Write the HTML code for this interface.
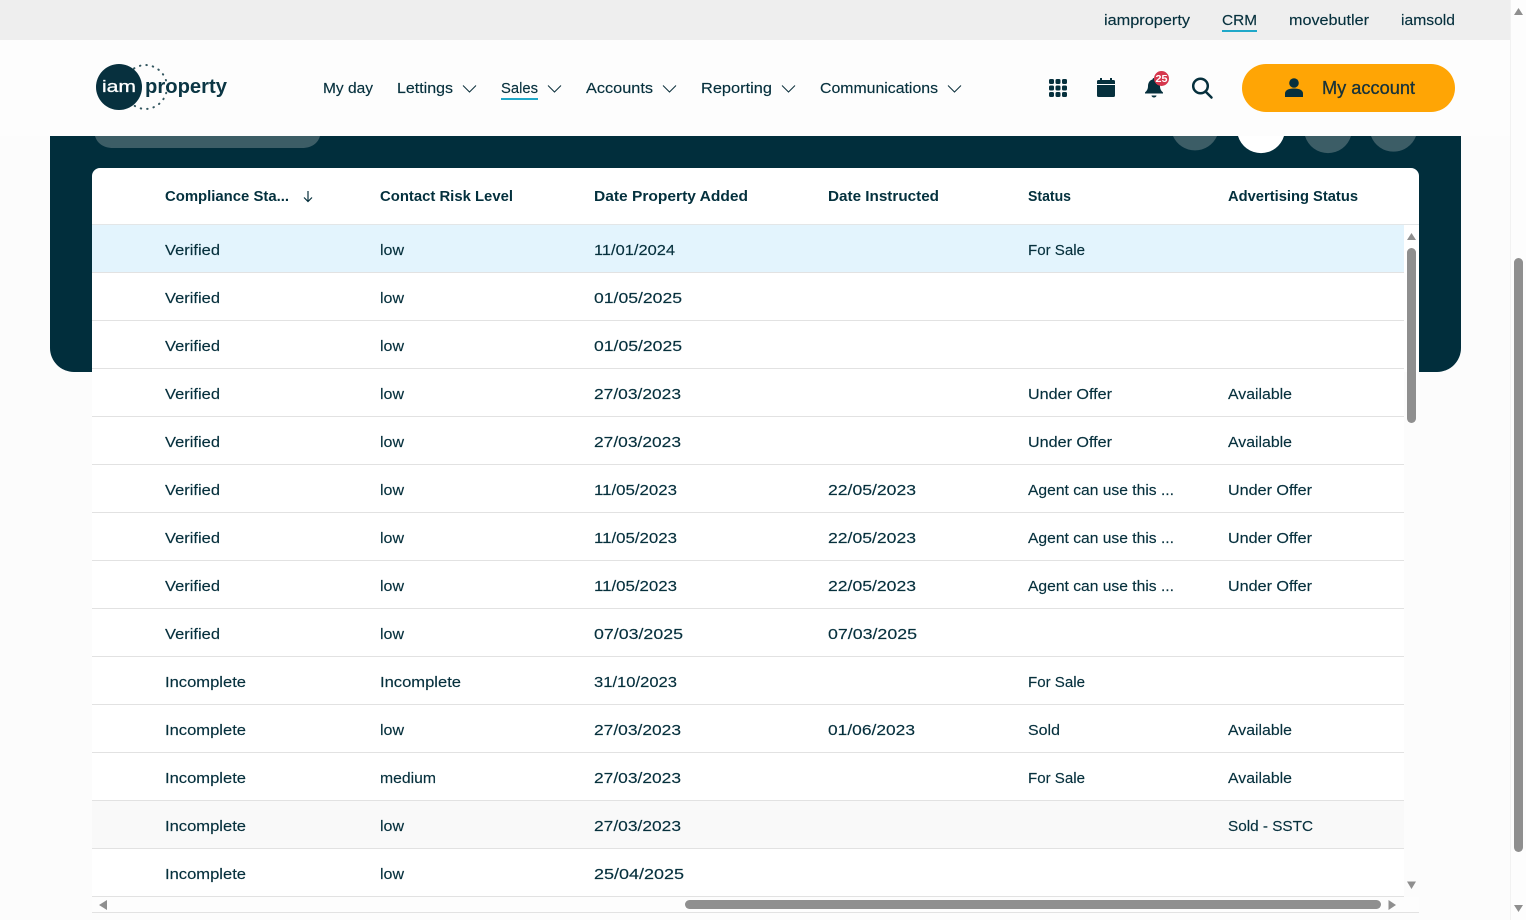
<!DOCTYPE html>
<html lang="en"><head><meta charset="utf-8"><title>iamproperty CRM</title>
<style>
html,body{margin:0;padding:0;width:1526px;height:920px;overflow:hidden;background:#fcfcfc}
svg{display:block;position:absolute;left:0;top:0}
text{font-family:"Liberation Sans",sans-serif;font-size:15px;fill:#06303d;stroke:#06303d;stroke-width:.15px}
.h{font-weight:bold;font-size:14.5px;fill:#03303d;stroke:none}
</style></head><body>
<svg width="1526" height="920" viewBox="0 0 1526 920" xmlns="http://www.w3.org/2000/svg">
<rect width="1526" height="920" fill="#fcfcfc"/>
<!-- panel -->
<path d="M50 136H1461V348a24 24 0 0 1-24 24H74a24 24 0 0 1-24-24Z" fill="#012e3c"/>
<path d="M95 136H320C318 143 312 148 302 148H113C103 148 97 143 95 136Z" fill="#3c5d66"/>
<g>
<path d="M1173 136a24 24 0 0 0 44 0Z" fill="#3c5d66"/>
<path d="M1238 136a24 24 0 0 0 46 0Z" fill="#ffffff"/>
<path d="M1305 136a24 24 0 0 0 46 0Z" fill="#3c5d66"/>
<path d="M1371 136a24 24 0 0 0 45 0Z" fill="#3c5d66"/>
</g>
<!-- top bar -->
<rect width="1510" height="40" fill="#eeeeee"/>
<rect y="40" width="1510" height="96" fill="#fdfdfd"/>
<text x="1104" y="25" textLength="86" lengthAdjust="spacingAndGlyphs">iamproperty</text>
<text x="1222" y="25" textLength="35" lengthAdjust="spacingAndGlyphs">CRM</text>
<rect x="1222" y="30" width="35" height="2" fill="#1fa8c9"/>
<text x="1289" y="25" textLength="80" lengthAdjust="spacingAndGlyphs">movebutler</text>
<text x="1401" y="25" textLength="54" lengthAdjust="spacingAndGlyphs">iamsold</text>
<!-- logo -->
<path d="M134 68.500A22 22 0 0 1 145 65A22 22 0 0 1 167 87A22 22 0 0 1 145 109A22 22 0 0 1 134 105.500" fill="none" stroke="#33565f" stroke-width="2" stroke-linecap="round" stroke-dasharray="0.5 6"/>
<circle cx="119" cy="87" r="23" fill="#07303e"/>
<text x="102" y="92" textLength="34" lengthAdjust="spacingAndGlyphs" style="fill:#fff;stroke:#fff;stroke-width:.3px;font-size:17px">iam</text>
<text x="145" y="93" textLength="82" lengthAdjust="spacingAndGlyphs" style="font-weight:bold;font-size:20px;fill:#0b3644;stroke:none">property</text>
<!-- nav -->
<text x="323" y="93" textLength="50" lengthAdjust="spacingAndGlyphs">My day</text>
<text x="397" y="93" textLength="56" lengthAdjust="spacingAndGlyphs">Lettings</text>
<text x="501" y="93" textLength="37" lengthAdjust="spacingAndGlyphs">Sales</text>
<rect x="501" y="98" width="37" height="2" fill="#1fa8c9"/>
<text x="586" y="93" textLength="67" lengthAdjust="spacingAndGlyphs">Accounts</text>
<text x="701" y="93" textLength="71" lengthAdjust="spacingAndGlyphs">Reporting</text>
<text x="820" y="93" textLength="118" lengthAdjust="spacingAndGlyphs">Communications</text>
<g fill="none" stroke="#0b2f3b" stroke-width="1">
<path d="M463 85.500l6.500 6.500 6.500-6.500"/><path d="M548 85.500l6.500 6.500 6.500-6.500"/><path d="M663 85.500l6.500 6.500 6.500-6.500"/><path d="M782 85.500l6.500 6.500 6.500-6.500"/><path d="M948 85.500l6.500 6.500 6.500-6.500"/>
</g>
<!-- icons -->
<g fill="#06303d">
<rect x="1049" y="79" width="5" height="5" rx="1.500"/><rect x="1055.500" y="79" width="5" height="5" rx="1.500"/><rect x="1062" y="79" width="5" height="5" rx="1.500"/>
<rect x="1049" y="85.500" width="5" height="5" rx="1.500"/><rect x="1055.500" y="85.500" width="5" height="5" rx="1.500"/><rect x="1062" y="85.500" width="5" height="5" rx="1.500"/>
<rect x="1049" y="92" width="5" height="5" rx="1.500"/><rect x="1055.500" y="92" width="5" height="5" rx="1.500"/><rect x="1062" y="92" width="5" height="5" rx="1.500"/>
<path d="M1097 81.500a1.500 1.500 0 0 1 1.500-1.500H1100V78h2v2h8v-2h2v2h1.500a1.500 1.500 0 0 1 1.500 1.500V84h-18Z"/>
<path d="M1097 85h18v10.500a1.500 1.500 0 0 1-1.500 1.500h-15a1.500 1.500 0 0 1-1.500-1.500Z"/>
<path d="M1154 78c-1 0-1.500.700-1.500 1.500-3 .8-4.500 3.500-4.500 6.500 0 3.500-1.500 5-3 6.500v1h18v-1c-1.500-1.500-3-3-3-6.500 0-3-1.500-5.700-4.500-6.500 0-.8-.5-1.500-1.500-1.500Z"/>
<path d="M1151.500 95.500h5a2.500 2 0 0 1-5 0Z"/>
<circle cx="1161.500" cy="78.500" r="7.500" fill="#d5374d"/>
</g>
<text x="1155.500" y="82" textLength="12" lengthAdjust="spacingAndGlyphs" style="fill:#fff;stroke:none;font-size:10px;font-weight:bold">25</text>
<g fill="none" stroke="#06303d" stroke-width="2.500"><circle cx="1200.500" cy="86" r="7.300"/><path d="M1206 92l5.500 5.500" stroke-linecap="round"/></g>
<rect x="1242" y="64" width="213" height="48" rx="24" fill="#ffa505"/>
<path d="M1285 97v-3.500c0-3 3-5 9-5s9 2 9 5V97Z" fill="#06303d"/><circle cx="1294" cy="83" r="4.800" fill="#06303d"/>
<text x="1322" y="94" textLength="93" lengthAdjust="spacingAndGlyphs" style="font-size:18px;fill:#17323a;stroke:#17323a;stroke-width:.3px">My account</text>
<!-- table -->
<path d="M92 176a8 8 0 0 1 8-8H1411a8 8 0 0 1 8 8V372H92Z" fill="#ffffff"/>
<rect x="92" y="372" width="1312" height="525" fill="#ffffff"/>
<rect x="92" y="224" width="1327" height="1" fill="#e3e6e7"/>
<rect x="92" y="225" width="1312" height="47" fill="#e3f4fd"/>
<rect x="92" y="801" width="1312" height="47" fill="#f9f9f9"/>
<g fill="#e2e2e2">
<rect x="92" y="272" width="1312" height="1"/><rect x="92" y="320" width="1312" height="1"/><rect x="92" y="368" width="1312" height="1"/><rect x="92" y="416" width="1312" height="1"/><rect x="92" y="464" width="1312" height="1"/><rect x="92" y="512" width="1312" height="1"/><rect x="92" y="560" width="1312" height="1"/><rect x="92" y="608" width="1312" height="1"/><rect x="92" y="656" width="1312" height="1"/><rect x="92" y="704" width="1312" height="1"/><rect x="92" y="752" width="1312" height="1"/><rect x="92" y="800" width="1312" height="1"/><rect x="92" y="848" width="1312" height="1"/><rect x="92" y="896" width="1312" height="1"/><rect x="92" y="912" width="1327" height="1"/>
</g>
<rect x="92" y="897" width="1327" height="15" fill="#fdfdfd"/>
<!-- header -->
<text class="h" x="165" y="201" textLength="124" lengthAdjust="spacingAndGlyphs">Compliance Sta...</text>
<path d="M308 191v10M304 197.500l4 4 4-4" fill="none" stroke="#06303d" stroke-width="1.200"/>
<text class="h" x="380" y="201" textLength="133" lengthAdjust="spacingAndGlyphs">Contact Risk Level</text>
<text class="h" x="594" y="201" textLength="154" lengthAdjust="spacingAndGlyphs">Date Property Added</text>
<text class="h" x="828" y="201" textLength="111" lengthAdjust="spacingAndGlyphs">Date Instructed</text>
<text class="h" x="1028" y="201" textLength="43" lengthAdjust="spacingAndGlyphs">Status</text>
<text class="h" x="1228" y="201" textLength="130" lengthAdjust="spacingAndGlyphs">Advertising Status</text>
<!-- rows -->
<g>
<text x="165" y="255" textLength="55" lengthAdjust="spacingAndGlyphs">Verified</text><text x="380" y="255" textLength="24" lengthAdjust="spacingAndGlyphs">low</text><text x="594" y="255" textLength="81" lengthAdjust="spacingAndGlyphs">11/01/2024</text><text x="1028" y="255" textLength="57" lengthAdjust="spacingAndGlyphs">For Sale</text>
<text x="165" y="303" textLength="55" lengthAdjust="spacingAndGlyphs">Verified</text><text x="380" y="303" textLength="24" lengthAdjust="spacingAndGlyphs">low</text><text x="594" y="303" textLength="88" lengthAdjust="spacingAndGlyphs">01/05/2025</text>
<text x="165" y="351" textLength="55" lengthAdjust="spacingAndGlyphs">Verified</text><text x="380" y="351" textLength="24" lengthAdjust="spacingAndGlyphs">low</text><text x="594" y="351" textLength="88" lengthAdjust="spacingAndGlyphs">01/05/2025</text>
<text x="165" y="399" textLength="55" lengthAdjust="spacingAndGlyphs">Verified</text><text x="380" y="399" textLength="24" lengthAdjust="spacingAndGlyphs">low</text><text x="594" y="399" textLength="87" lengthAdjust="spacingAndGlyphs">27/03/2023</text><text x="1028" y="399" textLength="84" lengthAdjust="spacingAndGlyphs">Under Offer</text><text x="1228" y="399" textLength="64" lengthAdjust="spacingAndGlyphs">Available</text>
<text x="165" y="447" textLength="55" lengthAdjust="spacingAndGlyphs">Verified</text><text x="380" y="447" textLength="24" lengthAdjust="spacingAndGlyphs">low</text><text x="594" y="447" textLength="87" lengthAdjust="spacingAndGlyphs">27/03/2023</text><text x="1028" y="447" textLength="84" lengthAdjust="spacingAndGlyphs">Under Offer</text><text x="1228" y="447" textLength="64" lengthAdjust="spacingAndGlyphs">Available</text>
<text x="165" y="495" textLength="55" lengthAdjust="spacingAndGlyphs">Verified</text><text x="380" y="495" textLength="24" lengthAdjust="spacingAndGlyphs">low</text><text x="594" y="495" textLength="83" lengthAdjust="spacingAndGlyphs">11/05/2023</text><text x="828" y="495" textLength="88" lengthAdjust="spacingAndGlyphs">22/05/2023</text><text x="1028" y="495" textLength="146" lengthAdjust="spacingAndGlyphs">Agent can use this ...</text><text x="1228" y="495" textLength="84" lengthAdjust="spacingAndGlyphs">Under Offer</text>
<text x="165" y="543" textLength="55" lengthAdjust="spacingAndGlyphs">Verified</text><text x="380" y="543" textLength="24" lengthAdjust="spacingAndGlyphs">low</text><text x="594" y="543" textLength="83" lengthAdjust="spacingAndGlyphs">11/05/2023</text><text x="828" y="543" textLength="88" lengthAdjust="spacingAndGlyphs">22/05/2023</text><text x="1028" y="543" textLength="146" lengthAdjust="spacingAndGlyphs">Agent can use this ...</text><text x="1228" y="543" textLength="84" lengthAdjust="spacingAndGlyphs">Under Offer</text>
<text x="165" y="591" textLength="55" lengthAdjust="spacingAndGlyphs">Verified</text><text x="380" y="591" textLength="24" lengthAdjust="spacingAndGlyphs">low</text><text x="594" y="591" textLength="83" lengthAdjust="spacingAndGlyphs">11/05/2023</text><text x="828" y="591" textLength="88" lengthAdjust="spacingAndGlyphs">22/05/2023</text><text x="1028" y="591" textLength="146" lengthAdjust="spacingAndGlyphs">Agent can use this ...</text><text x="1228" y="591" textLength="84" lengthAdjust="spacingAndGlyphs">Under Offer</text>
<text x="165" y="639" textLength="55" lengthAdjust="spacingAndGlyphs">Verified</text><text x="380" y="639" textLength="24" lengthAdjust="spacingAndGlyphs">low</text><text x="594" y="639" textLength="89" lengthAdjust="spacingAndGlyphs">07/03/2025</text><text x="828" y="639" textLength="89" lengthAdjust="spacingAndGlyphs">07/03/2025</text>
<text x="165" y="687" textLength="81" lengthAdjust="spacingAndGlyphs">Incomplete</text><text x="380" y="687" textLength="81" lengthAdjust="spacingAndGlyphs">Incomplete</text><text x="594" y="687" textLength="83" lengthAdjust="spacingAndGlyphs">31/10/2023</text><text x="1028" y="687" textLength="57" lengthAdjust="spacingAndGlyphs">For Sale</text>
<text x="165" y="735" textLength="81" lengthAdjust="spacingAndGlyphs">Incomplete</text><text x="380" y="735" textLength="24" lengthAdjust="spacingAndGlyphs">low</text><text x="594" y="735" textLength="87" lengthAdjust="spacingAndGlyphs">27/03/2023</text><text x="828" y="735" textLength="87" lengthAdjust="spacingAndGlyphs">01/06/2023</text><text x="1028" y="735" textLength="32" lengthAdjust="spacingAndGlyphs">Sold</text><text x="1228" y="735" textLength="64" lengthAdjust="spacingAndGlyphs">Available</text>
<text x="165" y="783" textLength="81" lengthAdjust="spacingAndGlyphs">Incomplete</text><text x="380" y="783" textLength="56" lengthAdjust="spacingAndGlyphs">medium</text><text x="594" y="783" textLength="87" lengthAdjust="spacingAndGlyphs">27/03/2023</text><text x="1028" y="783" textLength="57" lengthAdjust="spacingAndGlyphs">For Sale</text><text x="1228" y="783" textLength="64" lengthAdjust="spacingAndGlyphs">Available</text>
<text x="165" y="831" textLength="81" lengthAdjust="spacingAndGlyphs">Incomplete</text><text x="380" y="831" textLength="24" lengthAdjust="spacingAndGlyphs">low</text><text x="594" y="831" textLength="87" lengthAdjust="spacingAndGlyphs">27/03/2023</text><text x="1228" y="831" textLength="85" lengthAdjust="spacingAndGlyphs">Sold - SSTC</text>
<text x="165" y="879" textLength="81" lengthAdjust="spacingAndGlyphs">Incomplete</text><text x="380" y="879" textLength="24" lengthAdjust="spacingAndGlyphs">low</text><text x="594" y="879" textLength="90" lengthAdjust="spacingAndGlyphs">25/04/2025</text>
</g>
<!-- table scrollbars -->
<g fill="#8f8f8f">
<rect x="1407" y="248" width="9" height="175" rx="4.500"/>
<path d="M1411.500 233l4.500 7h-9Z"/>
<path d="M1411.500 889l-4.500-7.500h9Z"/>
<rect x="685" y="900" width="696" height="9" rx="4.500"/>
<path d="M99 905l8-5v10Z"/>
<path d="M1396 905l-7.500-5v10Z"/>
</g>
<!-- page scrollbar -->
<rect x="1510" y="0" width="16" height="920" fill="#fdfdfd"/>
<rect x="1510" y="0" width="1" height="920" fill="#f2f2f2"/>
<g fill="#8f8f8f">
<rect x="1514" y="258" width="9" height="594" rx="4.500"/>
<path d="M1518.500 8l4.500 7h-9Z"/>
<path d="M1518.500 912l-4.500-7h9Z"/>
</g>
</svg>
</body></html>
